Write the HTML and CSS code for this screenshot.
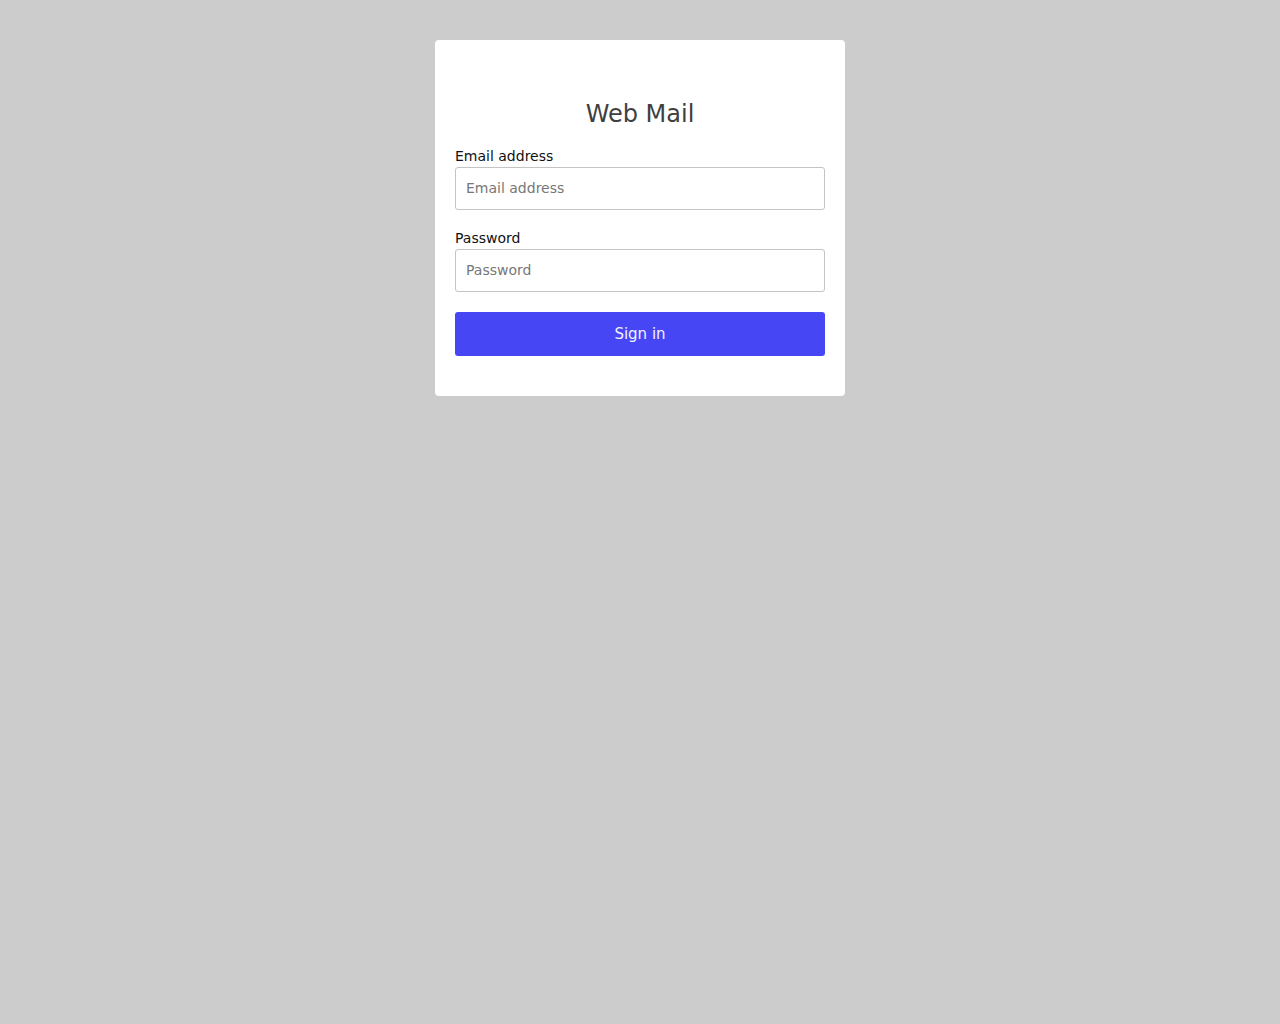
FILE: index.html
```html
<!DOCTYPE html>
<html lang="en">
<head>
<meta charset="utf-8">
<title>Web Mail</title>
<link rel="stylesheet" href="styles.css">
</head>
<body>
<main class="page">
  <form class="card">
    <h1 class="title">Web Mail</h1>
    <div class="field">
      <label class="label" for="email">Email address</label>
      <input class="input" id="email" type="email" placeholder="Email address">
    </div>
    <div class="field">
      <label class="label" for="password">Password</label>
      <input class="input" id="password" type="password" placeholder="Password">
    </div>
    <button class="btn" type="button">Sign in</button>
  </form>
</main>
</body>
</html>
```

FILE: styles.css
```css
* { box-sizing: border-box; }
html, body {
  margin: 0;
  padding: 0;
  background: #cccccc;
  font-family: "DejaVu Sans", sans-serif;
}
.page {
  display: flex;
  justify-content: center;
  padding-top: 40px;
}
.card {
  width: 410px;
  background: #ffffff;
  border-radius: 4px;
  padding: 60px 20px 40px;
  display: flex;
  flex-direction: column;
}
.title {
  margin: 0 0 17px;
  font-size: 24px;
  font-weight: 400;
  line-height: 29px;
  text-align: center;
  color: #3f3f3f;
}
.field {
  display: flex;
  flex-direction: column;
  margin-bottom: 18px;
}
.field + .field { margin-bottom: 20px; }
.label {
  font-size: 14px;
  line-height: 21px;
  color: #111111;
}
.input {
  height: 43px;
  padding: 9px 10px 11px;
  border: 1px solid #c4c4c4;
  border-radius: 3px;
  font-family: "DejaVu Sans", sans-serif;
  font-size: 14px;
  color: #333;
  background: #fff;
  outline: none;
}
.input::placeholder { color: #777777; }
.btn {
  height: 44px;
  border: none;
  border-radius: 3px;
  background: #4646f5;
  color: #f2f2ff;
  font-family: "DejaVu Sans", sans-serif;
  font-size: 15px;
  cursor: pointer;
}
```
